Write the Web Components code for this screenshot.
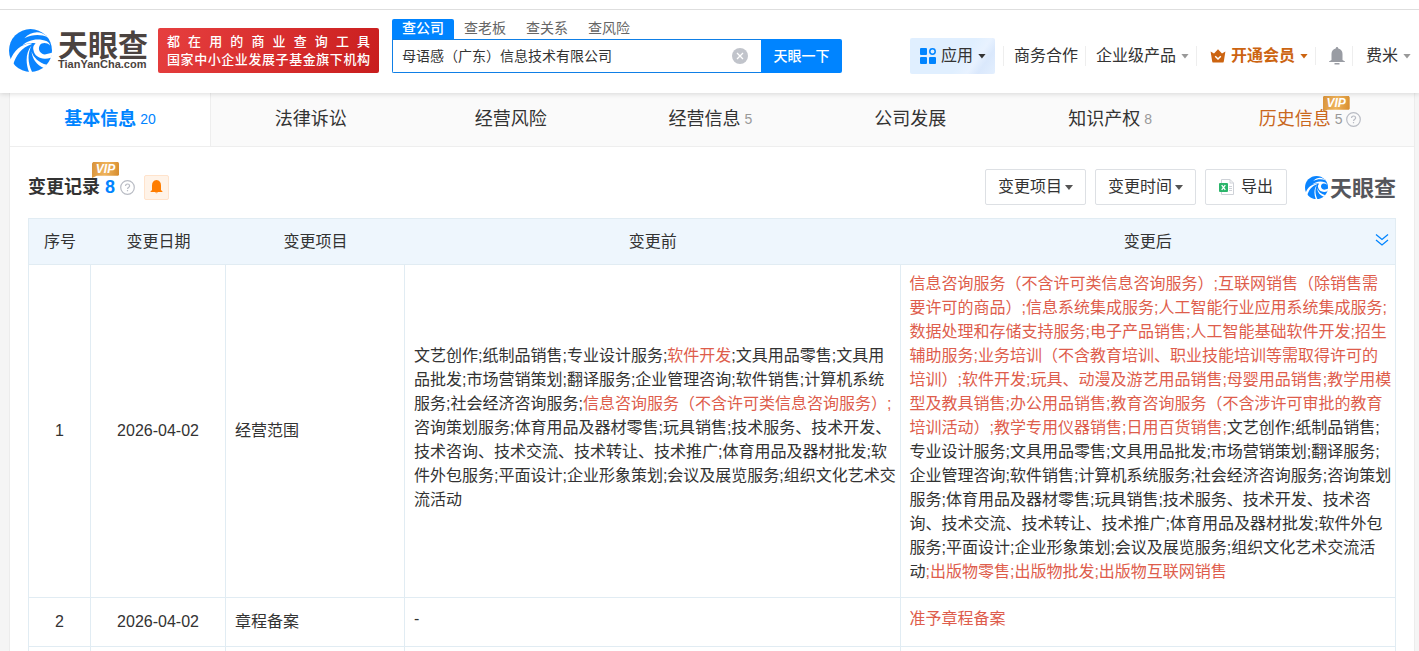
<!DOCTYPE html>
<html lang="zh-CN">
<head>
<meta charset="utf-8">
<meta name="viewport" content="width=device-width, initial-scale=1">
<title>天眼查</title>
<style>
  body { margin: 0; background: #f5f5f5; color: #333; font: 16px/24px "Liberation Sans", "Noto Sans CJK SC", sans-serif; }
</style>
</head>
<body>
<tyc-page>
  <tyc-header slot="header"></tyc-header>
  <tyc-tabs>
    <tyc-tab active count="20">基本信息</tyc-tab>
    <tyc-tab>法律诉讼</tyc-tab>
    <tyc-tab>经营风险</tyc-tab>
    <tyc-tab count="5">经营信息</tyc-tab>
    <tyc-tab>公司发展</tyc-tab>
    <tyc-tab count="8">知识产权</tyc-tab>
    <tyc-tab vip count="5">历史信息</tyc-tab>
  </tyc-tabs>
  <tyc-section-head count="8">
    变更记录
    <tyc-filter slot="tools">变更项目</tyc-filter>
    <tyc-filter slot="tools">变更时间</tyc-filter>
    <tyc-export slot="tools">导出</tyc-export>
    <tyc-logo slot="tools" small></tyc-logo>
  </tyc-section-head>
  <tyc-change-table></tyc-change-table>
</tyc-page>

<script>
const define = (name, html, setup) => {
  const template = document.createElement('template');
  template.innerHTML = html;
  customElements.define(name, class extends HTMLElement {
    constructor() {
      super();
      this.attachShadow({ mode: 'open' }).append(template.content.cloneNode(true));
    }
    connectedCallback() { if (setup) setup(this, this.shadowRoot); }
  });
};

define('tyc-page', `
  <style>
    :host { display: flex; flex-direction: column; height: 100vh; overflow: hidden; }
    .body { flex: 1; min-height: 0; overflow: hidden; margin: 0 4px 0 9px; background: #fff; border: solid #ececec; border-width: 0 1px; }
  </style>
  <slot name="header"></slot>
  <main class="body"><slot></slot></main>`);

define('tyc-caret', `
  <style>
    :host { display: block; flex: none; width: 8px; height: 5px; background: currentColor; clip-path: polygon(0 0, 100% 0, 50% 100%); }
  </style>`);

define('tyc-vip', `
  <style>
    :host { display: block; width: 27px; height: 16px; background: linear-gradient(100deg, #d8923a, #efb45c 50%, #d68a2b);
      clip-path: polygon(4% 0, 97% 0, 100% 10%, 100% 80%, 97% 86%, 18% 86%, 0 100%, 0 10%);
      color: #fff; font: italic bold 12px/14px "Liberation Sans", sans-serif; text-align: center; }
  </style>VIP`);

define('tyc-help', `
  <style>
    :host { display: block; flex: none; width: 15px; height: 15px; }
    svg { display: block; width: 100%; height: 100%; }
  </style>
  <svg viewBox="0 0 15 15" fill="none" stroke="#b9bcc4" stroke-width="1.2"><circle cx="7.5" cy="7.5" r="6.8"/><path d="M5.5 6.1c0-2.9 4.1-2.7 4.1-.2 0 1.4-2 1.5-2 3.1M7.5 10v1.3"/></svg>`);

define('tyc-logo', `
  <style>
    :host { display: flex; align-items: center; gap: 6px; color: #4b4340; }
    svg { display: block; flex: none; width: 43px; height: 43px; }
    .name { font: bold 30px/28px "Noto Sans CJK SC", sans-serif; }
    .site { font: bold 11px/12px "Liberation Sans", sans-serif; }
    :host([small]) { gap: 2px; color: #55565c; }
    :host([small]) svg { width: 23px; height: 23px; }
    :host([small]) .name { font-size: 22px; line-height: 24px; }
    :host([small]) .site { display: none; }
    .words { display: flex; flex-direction: column; gap: 1px; padding-bottom: 2px; }
  </style>
  <svg viewBox="0 0 42 42">
    <circle cx="21" cy="21" r="21" fill="#0a84ff"/>
    <path fill="#fff" d="M15 9C22 2 31 1 38 8C31 5 23 5 15 9Z"/>
    <path fill="#fff" d="M13 16C18 11 28 8 37 12C39 13 40 15 40 16C37 13 32 13 30 16C28 20 30 24 35 25L43 23L41 28C32 31 25 27 24 21C23 18 24 16 26 14C21 13 17 14 13 16Z"/>
    <path fill="#fff" d="M22 15C12 18 7 26 4 35L1 31C5 21 11 15 22 14Z"/>
    <path fill="#fff" d="M22 16C16 23 16 34 20 43L23 43C18 33 18 24 22 16Z"/>
    <path fill="#fff" d="M22 22C23 30 27 35 34 38L37 35C29 33 24 28 22 22Z"/>
  </svg>
  <div class="words"><span class="name">天眼查</span><span class="site">TianYanCha.com</span></div>`);

define('tyc-search', `
  <style>
    :host { display: block; width: 450px; font-size: 14px; }
    nav { display: flex; height: 20px; }
    a { padding: 0 10px; line-height: 18px; color: #666; text-decoration: none; }
    a.on { background: #0084ff; color: #fff; border-radius: 2px 2px 0 0; font-weight: 500; }
    form { display: flex; height: 34px; margin: 0; }
    .box { flex: 1; display: flex; align-items: center; box-sizing: border-box; border: 1px solid #0f7fe6; border-right: 0; border-radius: 0 0 0 2px; padding: 0 13px 0 9px; background: #fff; }
    input { flex: 1; min-width: 0; border: 0; outline: 0; padding: 0; background: none; font: inherit; color: #333; }
    button { border: 0; padding: 0; font: inherit; cursor: pointer; }
    .clear { width: 16px; height: 16px; background: none; }
    .clear svg { display: block; }
    .go { width: 81px; background: #0084ff; color: #fff; font-weight: 500; border-radius: 0 2px 2px 0; }
  </style>
  <nav><a class="on" href="#company">查公司</a><a href="#boss">查老板</a><a href="#relation">查关系</a><a href="#risk">查风险</a></nav>
  <form>
    <div class="box">
      <input type="text" aria-label="搜索公司" value="母语感（广东）信息技术有限公司">
      <button class="clear" type="button" aria-label="清除"><svg width="16" height="16" viewBox="0 0 16 16"><circle cx="8" cy="8" r="8" fill="#c1c4cb"/><path d="M5 5l6 6M11 5l-6 6" stroke="#fff" stroke-width="1.3"/></svg></button>
    </div>
    <button class="go" type="button">天眼一下</button>
  </form>`);

define('tyc-nav-item', `
  <style>
    :host { display: block; padding: 0 7px 0 10px; border-left: 1px solid #eee; line-height: 20px; }
    :host([wide]) { padding-left: 13px; }
    :host([last]) { padding-right: 0; }
    :host([member]) { --ink: #cc6411; --caret: #cc6411; font-weight: bold; }
    a { display: flex; align-items: center; gap: 5px; color: var(--ink, #333); text-decoration: none; white-space: nowrap; }
    tyc-caret { color: var(--caret, #999); }
    :host([plain]) tyc-caret { display: none; }
  </style>
  <a href="#menu"><slot></slot><tyc-caret></tyc-caret></a>`);

define('tyc-header', `
  <style>
    :host { display: block; position: relative; z-index: 1; flex: none; background: #fff; box-shadow: 0 1px 5px rgba(0,0,0,.14); }
    .rule { height: 9px; border-bottom: 1px solid #dedede; }
    .bar { display: flex; align-items: flex-start; height: 83px; padding: 0 8px 0 9px; }
    tyc-logo { margin-top: 19px; }
    .banner { box-sizing: border-box; width: 221px; height: 45px; margin: 18px 0 0 10px; padding: 5px 9px; border-radius: 2px; background: linear-gradient(115deg, #e63f3f, #d92f2f 50%, #c81d1d); color: #fff; font-size: 13px; font-weight: 500; line-height: 18px; }
    .banner div { text-align: justify; text-align-last: justify; }
    tyc-search { margin: 9px 0 0 13px; }
    nav { display: flex; align-items: center; margin: 28px 0 0 auto; height: 36px; }
    .apps { display: flex; align-items: center; gap: 5px; box-sizing: border-box; width: 85px; height: 36px; margin-right: 8px; padding: 0 9px 0 10px; border: 0; border-radius: 2px; background: linear-gradient(125deg, #e0efff 60%, #e8f2ff 74%, #dae8fc 84%, #e3effe); color: #333; font: inherit; cursor: pointer; }
    svg { display: block; flex: none; }
  </style>
  <div class="rule"></div>
  <div class="bar">
    <tyc-logo></tyc-logo>
    <div class="banner"><div>都在用的商业查询工具</div><div>国家中小企业发展子基金旗下机构</div></div>
    <tyc-search></tyc-search>
    <nav>
      <button class="apps" type="button">
        <svg width="16" height="16" viewBox="0 0 16 16" fill="#0084ff"><rect width="7" height="7" rx="1"/><rect y="9" width="7" height="7" rx="1"/><rect x="9" y="9" width="7" height="7" rx="1"/><circle cx="12.5" cy="3.5" r="2.7" fill="none" stroke="#0084ff" stroke-width="1.5"/></svg>
        应用<tyc-caret></tyc-caret>
      </button>
      <tyc-nav-item plain>商务合作</tyc-nav-item>
      <tyc-nav-item>企业级产品</tyc-nav-item>
      <tyc-nav-item wide member>
        <svg width="16" height="14" viewBox="0 0 16 14" fill="#cc6411"><path d="M.6 2.6L4 4.6 8 .2l4 4.4 3.4-2-1.6 9.8q-.2 1.2-1.4 1.2H3.6q-1.2 0-1.4-1.2z"/><path d="M5.2 7.2L8 10l2.800-2.800" fill="none" stroke="#fff" stroke-width="1.5"/></svg>
        开通会员</tyc-nav-item>
      <tyc-nav-item wide plain>
        <svg width="16" height="18" viewBox="0 0 16 18" fill="#999ca3"><path d="M8 0q1.200 0 1.300 1.400Q13.500 2.400 13.500 7v6L16 14.500V15H0v-.5L2.500 13V7q0-4.600 4.200-5.600Q6.800 0 8 0zM5.500 16h5v1.600h-5z"/></svg>
      </tyc-nav-item>
      <tyc-nav-item wide last>费米</tyc-nav-item>
    </nav>
  </div>`);

define('tyc-tabs', `
  <style>:host { display: flex; height: 53px; padding-right: 4px; background: #fafafa; border-bottom: 1px solid #eee; }</style>
  <slot></slot>`);

define('tyc-tab', `
  <style>
    :host { display: block; flex: 1; font-size: 18px; }
    a { position: relative; display: flex; justify-content: center; align-items: center; height: 52px; gap: 4px; color: #333; text-decoration: none; white-space: nowrap; }
    .count { color: #999; font-size: 14px; }
    .count:empty { display: none; }
    .label { position: relative; }
    tyc-vip { position: absolute; left: 64px; top: -11px; }
    tyc-vip, tyc-help { display: none; }
    :host([vip]) tyc-vip, :host([vip]) tyc-help { display: block; }
    :host([vip]) .label { color: #c9671c; }
    :host([active]) { background: #fff; border-right: 1px solid #eee; }
    :host([active]) .label { color: #0084ff; font-weight: bold; }
    :host([active]) .count { color: #0084ff; }
  </style>
  <a href="#tab"><span class="label"><slot></slot><tyc-vip></tyc-vip></span><span class="count"></span><tyc-help></tyc-help></a>`,
  (el, root) => { root.querySelector('.count').textContent = el.getAttribute('count') || ''; });

define('tyc-section-head', `
  <style>
    :host { display: flex; align-items: center; height: 36px; padding: 22px 18px 13px; }
    h2 { position: relative; display: flex; align-items: center; gap: 5px; margin: 0; font-size: 18px; line-height: 24px; }
    .count { color: #0084ff; }
    tyc-vip { position: absolute; left: 64px; top: -13px; }
    .alert { display: flex; justify-content: center; align-items: center; box-sizing: border-box; width: 25px; height: 25px; margin-left: 9px; padding: 0; border: 1px solid #ffe3cc; border-radius: 2px; background: #fff3e8; }
    .tools { display: flex; align-items: center; gap: 9px; margin-left: auto; }
    ::slotted(tyc-logo) { margin-left: 9px; }
  </style>
  <h2><slot></slot><span class="count"></span><tyc-help></tyc-help><tyc-vip></tyc-vip></h2>
  <button class="alert" type="button" aria-label="监控提醒"><svg width="13" height="14" viewBox="0 0 13 14" fill="#ff7d00"><path d="M6.5 0Q11 .6 11 5.5V10l1.5 1.5V12H.5v-.5L2 10V5.5Q2 .6 6.5 0zM4.800 12.500h3.400q-1.700 1.500-3.400 0z"/></svg></button>
  <div class="tools"><slot name="tools"></slot></div>`,
  (el, root) => { root.querySelector('.count').textContent = el.getAttribute('count'); });

define('tyc-filter', `
  <style>
    :host { display: block; position: relative; }
    select { appearance: none; display: block; box-sizing: border-box; height: 36px; padding: 0 22px 0 12px; border: 1px solid #dde0e4; border-radius: 2px; background: #fff; color: #333; font: inherit; }
    tyc-caret { position: absolute; right: 13px; top: 16px; color: #555; pointer-events: none; }
  </style>
  <select><option></option></select><tyc-caret></tyc-caret>`,
  (el, root) => {
    const name = el.textContent.trim();
    root.querySelector('option').textContent = name;
    root.querySelector('select').setAttribute('aria-label', name);
  });

define('tyc-export', `
  <style>
    :host { display: block; }
    button { display: flex; align-items: center; gap: 6px; box-sizing: border-box; height: 36px; padding: 0 13px; border: 1px solid #dde0e4; border-radius: 2px; background: #fff; color: #333; font: inherit; }
  </style>
  <button type="button"><svg width="16" height="16" viewBox="0 0 16 16"><path d="M2.5.5H11L14.5 4v11.500h-12z" fill="#fff" stroke="#cfd2d8"/><path d="M11 .5V4h3.500M10 7.500h3M10 9.500h3M10 11.500h3" fill="none" stroke="#cfd2d8"/><rect y="4" width="9" height="9" rx="1" fill="#2bb56a"/><path d="M2.700 6.200l3.600 4.600M6.300 6.200l-3.600 4.600" stroke="#fff" stroke-width="1.3"/></svg><slot></slot></button>`);

define('tyc-change-table', `
  <style>
    :host { display: block; padding: 0 18px; }
    table { width: 100%; table-layout: fixed; border-collapse: separate; border-spacing: 0; border: solid #e1ecf3; border-width: 1px 0 0 1px; }
    th, td { box-sizing: border-box; border-bottom: 1px solid #e1ecf3; }
    th { height: 46px; padding: 0; background: #eef6fd; font-weight: normal; }
    th:last-child { position: relative; border-right: 1px solid #e1ecf3; }
    td { height: 49px; border-right: 1px solid #e1ecf3; padding: 10px 0; text-align: center; }
    .item { padding-left: 9px; text-align: left; }
    .text { padding: 7px 2px 13px 9px; text-align: left; }
    em { font-style: normal; color: #de5d4c; }
    .no { width: 62px; } .date { width: 135px; } .kind { width: 179px; }
    .expand { position: absolute; right: 5px; top: 13px; width: 16px; height: 16px; padding: 0; border: 0; background: none; }
    svg { display: block; }
  </style>
  <table>
    <colgroup><col class="no"><col class="date"><col class="kind"><col><col></colgroup>
    <thead><tr><th>序号</th><th>变更日期</th><th>变更项目</th><th>变更前</th><th>变更后<button class="expand" type="button" aria-label="展开"><svg width="16" height="16" viewBox="0 0 16 16" fill="none" stroke="#0084ff" stroke-width="1.3"><path d="M2 2.500l6 5 6-5M2 8l6 5 6-5"/></svg></button></th></tr></thead>
    <tbody>
      <tr><td>1</td><td>2026-04-02</td><td class="item">经营范围</td>
        <td class="text">文艺创作;纸制品销售;专业设计服务;<em>软件开发</em>;文具用品零售;文具用品批发;市场营销策划;翻译服务;企业管理咨询;软件销售;计算机系统服务;社会经济咨询服务;<em>信息咨询服务（不含许可类信息咨询服务）;</em>咨询策划服务;体育用品及器材零售;玩具销售;技术服务、技术开发、技术咨询、技术交流、技术转让、技术推广;体育用品及器材批发;软件外包服务;平面设计;企业形象策划;会议及展览服务;组织文化艺术交流活动</td>
        <td class="text"><em>信息咨询服务（不含许可类信息咨询服务）;互联网销售（除销售需要许可的商品）;信息系统集成服务;人工智能行业应用系统集成服务;数据处理和存储支持服务;电子产品销售;人工智能基础软件开发;招生辅助服务;业务培训（不含教育培训、职业技能培训等需取得许可的培训）;软件开发;玩具、动漫及游艺用品销售;母婴用品销售;教学用模型及教具销售;办公用品销售;教育咨询服务（不含涉许可审批的教育培训活动）;教学专用仪器销售;日用百货销售;</em>文艺创作;纸制品销售;专业设计服务;文具用品零售;文具用品批发;市场营销策划;翻译服务;企业管理咨询;软件销售;计算机系统服务;社会经济咨询服务;咨询策划服务;体育用品及器材零售;玩具销售;技术服务、技术开发、技术咨询、技术交流、技术转让、技术推广;体育用品及器材批发;软件外包服务;平面设计;企业形象策划;会议及展览服务;组织文化艺术交流活动<em>;出版物零售;出版物批发;出版物互联网销售</em></td></tr>
      <tr><td>2</td><td>2026-04-02</td><td class="item">章程备案</td><td class="text">-</td><td class="text"><em>准予章程备案</em></td></tr>
      <tr><td></td><td></td><td></td><td></td><td></td></tr>
    </tbody>
  </table>`);
</script>
</body>
</html>
